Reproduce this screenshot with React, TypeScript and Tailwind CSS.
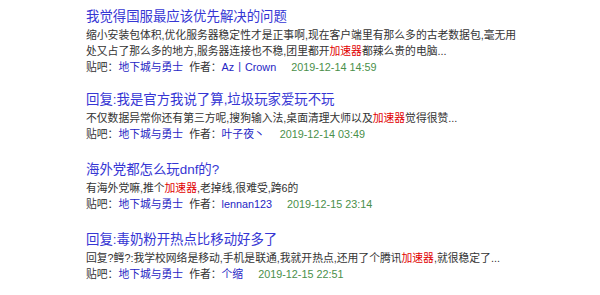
const posts = [
  {
    title: "我觉得国服最应该优先解决的问题",
    lines: [
      ["缩小安装包体积,优化服务器稳定性才是正事啊,现在客户端里有那么多的古老数据包,毫无用"],
      ["处又占了那么多的地方,服务器连接也不稳,团里都开", "加速器", "都辣么贵的电脑..."],
    ],
    author: "Az丨Crown",
    date: "2019-12-14 14:59",
  },
  {
    title: "回复:我是官方我说了算,垃圾玩家爱玩不玩",
    lines: [["不仅数据异常你还有第三方呢,搜狗输入法,桌面清理大师以及", "加速器", "觉得很赞..."]],
    author: "叶子夜丶",
    date: "2019-12-14 03:49",
  },
  {
    title: "海外党都怎么玩dnf的?",
    lines: [["有海外党嘛,推个", "加速器", ",老掉线,很难受,跨6的"]],
    author: "lennan123",
    date: "2019-12-15 23:14",
  },
  {
    title: "回复:毒奶粉开热点比移动好多了",
    lines: [["回复?鳄?:我学校网络是移动,手机是联通,我就开热点,还用了个腾讯", "加速器", ",就很稳定了..."]],
    author: "个缩",
    date: "2019-12-15 22:51",
  },
];

export default function App() {
  return (
    <div
      className="w-[600px] h-[295px] overflow-hidden bg-white pl-[86px] pt-[8px]"
      style={{ fontFamily: '"Liberation Sans", Arial, "Noto Sans CJK SC", sans-serif' }}
    >
      {posts.map((p, i) => (
        <div key={i} className={i === 0 ? "mb-[16px]" : "mb-[19px]"}>
          <div className="text-[13.4px] leading-[18px] text-[#3636d4] mb-[1px]">
            {p.title}
          </div>
          <div className="text-[10.8px] leading-[16px] text-[#333]">
            {p.lines.map((line, j) => (
              <div key={j} className="whitespace-nowrap">
                {line.map((part, k) =>
                  k === 1 ? (
                    <span key={k} className="text-[#e10000]">
                      {part}
                    </span>
                  ) : (
                    <span key={k}>{part}</span>
                  )
                )}
              </div>
            ))}
          </div>
          <div className="flex text-[10.8px] leading-[16px] whitespace-nowrap">
            <span className="text-[#333]">贴吧：</span>
            <span className="text-[#2626c4]">地下城与勇士</span>
            <span className="ml-[6px] text-[#333]">作者：</span>
            <span className="text-[#2626c4]">{p.author}</span>
            <span className="ml-[15px] text-[#4a8f4a]">{p.date}</span>
          </div>
        </div>
      ))}
    </div>
  );
}
